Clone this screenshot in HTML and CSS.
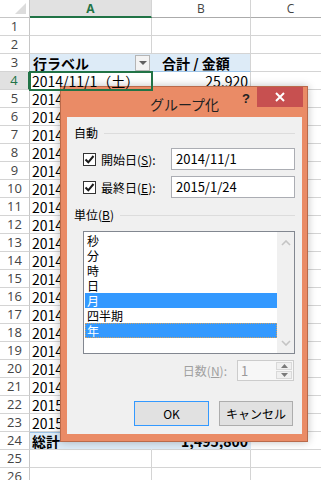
FILE: index.html
```html
<!DOCTYPE html>
<html lang="ja">
<head>
    <meta charset="UTF-8">
    <title>グループ化</title>
    <link rel="stylesheet" href="styles.css">
</head>
<body>
    <div class="sheet">
        <div class="corner"><span class="tri"></span></div>
        <div class="ch sel">A</div>
        <div class="ch">B</div>
        <div class="ch">C</div>

        <div class="rh">1</div><div class="cell"></div><div class="cell"></div><div class="cell"></div>
        <div class="rh">2</div><div class="cell"></div><div class="cell"></div><div class="cell"></div>

        <div class="rh">3</div>
        <div class="cell pv pv-a">行ラベル<span class="filter"></span></div>
        <div class="cell pv">合計 / 金額</div>
        <div class="cell"></div>

        <div class="rh sel">4</div>
        <div class="cell active">2014/11/1（土）</div>
        <div class="cell num">25,920</div>
        <div class="cell"></div>

        <div class="rh">5</div><div class="cell">2014/11/2（日）</div><div class="cell"></div><div class="cell"></div>
        <div class="rh">6</div><div class="cell">2014/11/3（月）</div><div class="cell"></div><div class="cell"></div>
        <div class="rh">7</div><div class="cell">2014/11/8（土）</div><div class="cell"></div><div class="cell"></div>
        <div class="rh">8</div><div class="cell">2014/11/9（日）</div><div class="cell"></div><div class="cell"></div>
        <div class="rh">9</div><div class="cell">2014/11/15（土）</div><div class="cell"></div><div class="cell"></div>
        <div class="rh">10</div><div class="cell">2014/11/16（日）</div><div class="cell"></div><div class="cell"></div>
        <div class="rh">11</div><div class="cell">2014/11/22（土）</div><div class="cell"></div><div class="cell"></div>
        <div class="rh">12</div><div class="cell">2014/11/23（日）</div><div class="cell"></div><div class="cell"></div>
        <div class="rh">13</div><div class="cell">2014/11/29（土）</div><div class="cell"></div><div class="cell"></div>
        <div class="rh">14</div><div class="cell">2014/11/30（日）</div><div class="cell"></div><div class="cell"></div>
        <div class="rh">15</div><div class="cell">2014/12/6（土）</div><div class="cell"></div><div class="cell"></div>
        <div class="rh">16</div><div class="cell">2014/12/7（日）</div><div class="cell"></div><div class="cell"></div>
        <div class="rh">17</div><div class="cell">2014/12/13（土）</div><div class="cell"></div><div class="cell"></div>
        <div class="rh">18</div><div class="cell">2014/12/14（日）</div><div class="cell"></div><div class="cell"></div>
        <div class="rh">19</div><div class="cell">2014/12/20（土）</div><div class="cell"></div><div class="cell"></div>
        <div class="rh">20</div><div class="cell">2014/12/21（日）</div><div class="cell"></div><div class="cell"></div>
        <div class="rh">21</div><div class="cell">2014/12/27（土）</div><div class="cell"></div><div class="cell"></div>
        <div class="rh">22</div><div class="cell">2015/1/17（土）</div><div class="cell"></div><div class="cell"></div>
        <div class="rh">23</div><div class="cell">2015/1/24（土）</div><div class="cell"></div><div class="cell"></div>

        <div class="rh">24</div>
        <div class="cell total">総計</div>
        <div class="cell total num">1,495,800</div>
        <div class="cell"></div>

        <div class="rh">25</div><div class="cell"></div><div class="cell"></div><div class="cell"></div>
        <div class="rh">26</div><div class="cell"></div><div class="cell"></div><div class="cell"></div>
    </div>

    <div class="dialog">
        <div class="titlebar">
            <span></span>
            <span class="title">グループ化</span>
            <div class="controls">
                <span class="help">?</span>
                <span class="close">
                    <svg width="10" height="10" viewBox="0 0 10 10"><path d="M1 1 L9 9 M9 1 L1 9" stroke="#fff" stroke-width="2"/></svg>
                </span>
            </div>
        </div>

        <div class="client">
            <div class="group"><span>自動</span><span class="rule"></span></div>

            <div class="field first">
                <span class="check">
                    <svg width="11" height="11" viewBox="0 0 11 11"><path d="M1.5 5.5 L4.3 8.3 L9.5 2" fill="none" stroke="#1a1a1a" stroke-width="2"/></svg>
                </span>
                <span class="lbl">開始日(<u>S</u>):</span>
                <span class="input">2014/11/1</span>
            </div>
            <div class="field">
                <span class="check">
                    <svg width="11" height="11" viewBox="0 0 11 11"><path d="M1.5 5.5 L4.3 8.3 L9.5 2" fill="none" stroke="#1a1a1a" stroke-width="2"/></svg>
                </span>
                <span class="lbl">最終日(<u>E</u>):</span>
                <span class="input">2015/1/24</span>
            </div>

            <div class="group second"><span>単位(<u>B</u>)</span><span class="rule"></span></div>

            <div class="listbox">
                <div class="items">
                    <div class="item">秒</div>
                    <div class="item">分</div>
                    <div class="item">時</div>
                    <div class="item">日</div>
                    <div class="item on">月</div>
                    <div class="item">四半期</div>
                    <div class="item on focus">年</div>
                </div>
                <div class="scroll">
                    <svg width="10" height="6" viewBox="0 0 10 6"><path d="M1 5 L5 1 L9 5" fill="none" stroke="#c4c4c4" stroke-width="1.6"/></svg>
                    <svg width="10" height="6" viewBox="0 0 10 6"><path d="M1 1 L5 5 L9 1" fill="none" stroke="#c4c4c4" stroke-width="1.6"/></svg>
                </div>
            </div>

            <div class="days">
                <span class="days-lbl">日数(<u>N</u>):</span>
                <div class="spin">
                    <span class="spin-val">1</span>
                    <div class="spin-btns">
                        <span class="spin-btn"><svg width="7" height="4" viewBox="0 0 7 4"><path d="M0 4 L3.5 0 L7 4 Z" fill="#7a7a7a"/></svg></span>
                        <span class="spin-btn"><svg width="7" height="4" viewBox="0 0 7 4"><path d="M0 0 L3.5 4 L7 0 Z" fill="#7a7a7a"/></svg></span>
                    </div>
                </div>
            </div>

            <div class="buttons">
                <span class="btn default">OK</span>
                <span class="btn">キャンセル</span>
            </div>
        </div>
    </div>
</body>
</html>
```

FILE: styles.css
```css
body {
    margin: 0;
    width: 321px;
    height: 480px;
    overflow: hidden;
    position: relative;
    background: #fff;
    font-family: "Noto Sans CJK JP", "Liberation Sans", sans-serif;
}

/* spreadsheet grid */
.sheet {
    display: grid;
    grid-template-columns: 30px 122px 99px 80px;
    grid-auto-rows: 18px;
}

.corner,
.ch,
.rh,
.cell {
    box-sizing: border-box;
    border-right: 1px solid #d4d4d4;
    border-bottom: 1px solid #d4d4d4;
}

.corner {
    display: flex;
    justify-content: flex-end;
    align-items: flex-end;
    padding: 0 3px 3px 0;
    border-color: #c6c6c6;
}

.tri {
    width: 0;
    height: 0;
    border-left: 11px solid transparent;
    border-bottom: 11px solid #dcdcdc;
}

.ch {
    font-family: "Open Sans", "Liberation Sans", sans-serif;
    font-size: 12px;
    line-height: 17px;
    text-align: center;
    color: #444;
    border-bottom-color: #ababab;
    border-right-color: #d4d4d4;
}

.ch.sel {
    background: #e1e1e1;
    color: #217346;
    font-weight: bold;
    border-bottom: 2px solid #217346;
}

.rh {
    font-family: "Open Sans", "Liberation Sans", sans-serif;
    font-size: 13px;
    line-height: 17px;
    text-align: center;
    color: #444;
    border-right-color: #c6c6c6;
}

.rh.sel {
    background: #e1e1e1;
    color: #217346;
    border-right: 2px solid #217346;
}

.cell {
    display: flex;
    align-items: flex-end;
    padding: 0 2px 0 2px;
    font-size: 14px;
    line-height: 16px;
    color: #000;
    white-space: nowrap;
    overflow: hidden;
}

.num {
    justify-content: flex-end;
}

.pv {
    background: #ddebf7;
    border-bottom-color: #9bc2e6;
    font-weight: bold;
    padding-left: 10px;
}

.pv-a {
    border-right-color: #ddebf7;
    padding-left: 3px;
    padding-right: 1px;
}

.filter {
    margin-left: auto;
    align-self: center;
    width: 15px;
    height: 16px;
    box-sizing: border-box;
    border: 1px solid #b5b5b5;
    background: #f3f3f3;
    display: flex;
    justify-content: center;
    align-items: center;
}

.filter::after {
    content: "";
    border-left: 4px solid transparent;
    border-right: 4px solid transparent;
    border-top: 4px solid #606060;
}

.active {
    outline: 2px solid #217346;
    outline-offset: -1px;
    position: relative;
    z-index: 1;
}

.total {
    background: #ddebf7;
    box-shadow: inset 0 1px #9bc2e6;
    font-weight: bold;
    border-right-color: #ddebf7;
}

/* dialog */
.dialog {
    position: absolute;
    left: 60px;
    top: 86px;
    width: 248px;
    height: 356px;
    box-sizing: border-box;
    background: #ea8b66;
    border: 1px solid #b96a4b;
    box-shadow: 0 0 8px rgba(0, 0, 0, 0.25);
    padding: 0 5px 7px 6px;
    display: flex;
    flex-direction: column;
}

.titlebar {
    height: 30px;
    display: grid;
    grid-template-columns: 1fr auto 1fr;
}

.title {
    font-size: 14px;
    line-height: 30px;
    padding-top: 2px;
    color: #222;
}

.controls {
    display: flex;
    justify-content: flex-end;
    align-items: flex-start;
}

.help {
    font-family: "Liberation Sans", sans-serif;
    font-weight: bold;
    font-size: 13px;
    line-height: 14px;
    color: #222;
    margin-top: 5px;
    margin-right: 7px;
}

.close {
    width: 46px;
    height: 20px;
    background: #c75050;
    margin-right: -1px;
    display: flex;
    justify-content: center;
    align-items: center;
}

.client {
    flex: 1;
    background: #f0f0f0;
    padding: 8px 7px 0 7px;
    font-size: 12px;
    color: #000;
}

.group {
    display: flex;
    align-items: center;
    line-height: 16px;
    gap: 6px;
}

.group.second {
    margin-top: 9px;
}

.rule {
    flex: 1;
    height: 1px;
    background: #dcdcdc;
}

.field {
    display: flex;
    align-items: center;
    height: 22px;
    padding-left: 9px;
    margin-top: 6px;
}

.field.first {
    margin-top: 7px;
}

.check {
    width: 13px;
    height: 13px;
    box-sizing: border-box;
    border: 1px solid #333;
    background: #fff;
    display: flex;
    justify-content: center;
    align-items: center;
}

.lbl {
    margin-left: 5px;
}

.input {
    margin-left: auto;
    width: 124px;
    height: 22px;
    box-sizing: border-box;
    border: 1px solid #abadb3;
    background: #fff;
    padding-left: 4px;
    font-size: 13px;
    line-height: 20px;
}

.listbox {
    margin: 8px 0 0 9px;
    width: 212px;
    height: 123px;
    box-sizing: border-box;
    border: 1px solid #828790;
    background: #fff;
    display: flex;
}

.items {
    flex: 1;
    padding: 1px 0 0 1px;
}

.item {
    height: 15px;
    line-height: 15px;
    padding-left: 2px;
    box-sizing: border-box;
}

.item.on {
    background: #3399ff;
    color: #fff;
}

.item.focus {
    outline: 1px dotted #d0a060;
    outline-offset: -1px;
}

.scroll {
    width: 17px;
    background: #f0f0f0;
    display: flex;
    flex-direction: column;
    justify-content: space-between;
    align-items: center;
    padding: 8px 0 7px;
}

.days {
    margin-top: 6px;
    display: flex;
    justify-content: flex-end;
    align-items: center;
    padding-right: 1px;
}

.days-lbl {
    color: #a0a0a0;
    margin-right: 10px;
}

.spin {
    width: 57px;
    height: 21px;
    box-sizing: border-box;
    border: 1px solid #cccccc;
    background: #f7f7f7;
    display: flex;
}

.spin-val {
    flex: 1;
    padding-left: 3px;
    font-size: 13px;
    line-height: 19px;
    color: #9a9a9a;
}

.spin-btns {
    width: 16px;
    display: flex;
    flex-direction: column;
    gap: 1px;
    padding: 1px 1px 1px 0;
}

.spin-btn {
    flex: 1;
    background: #f0f0f0;
    border: 1px solid #d9d9d9;
    display: flex;
    justify-content: center;
    align-items: center;
}

.buttons {
    margin-top: 20px;
    display: flex;
    justify-content: flex-end;
    gap: 10px;
    padding-right: 2px;
}

.btn {
    width: 74px;
    height: 25px;
    box-sizing: border-box;
    border: 1px solid #adadad;
    background: #e1e1e1;
    text-align: center;
    line-height: 23px;
}

.btn.default {
    width: 75px;
    border-color: #3399ff;
}
```
